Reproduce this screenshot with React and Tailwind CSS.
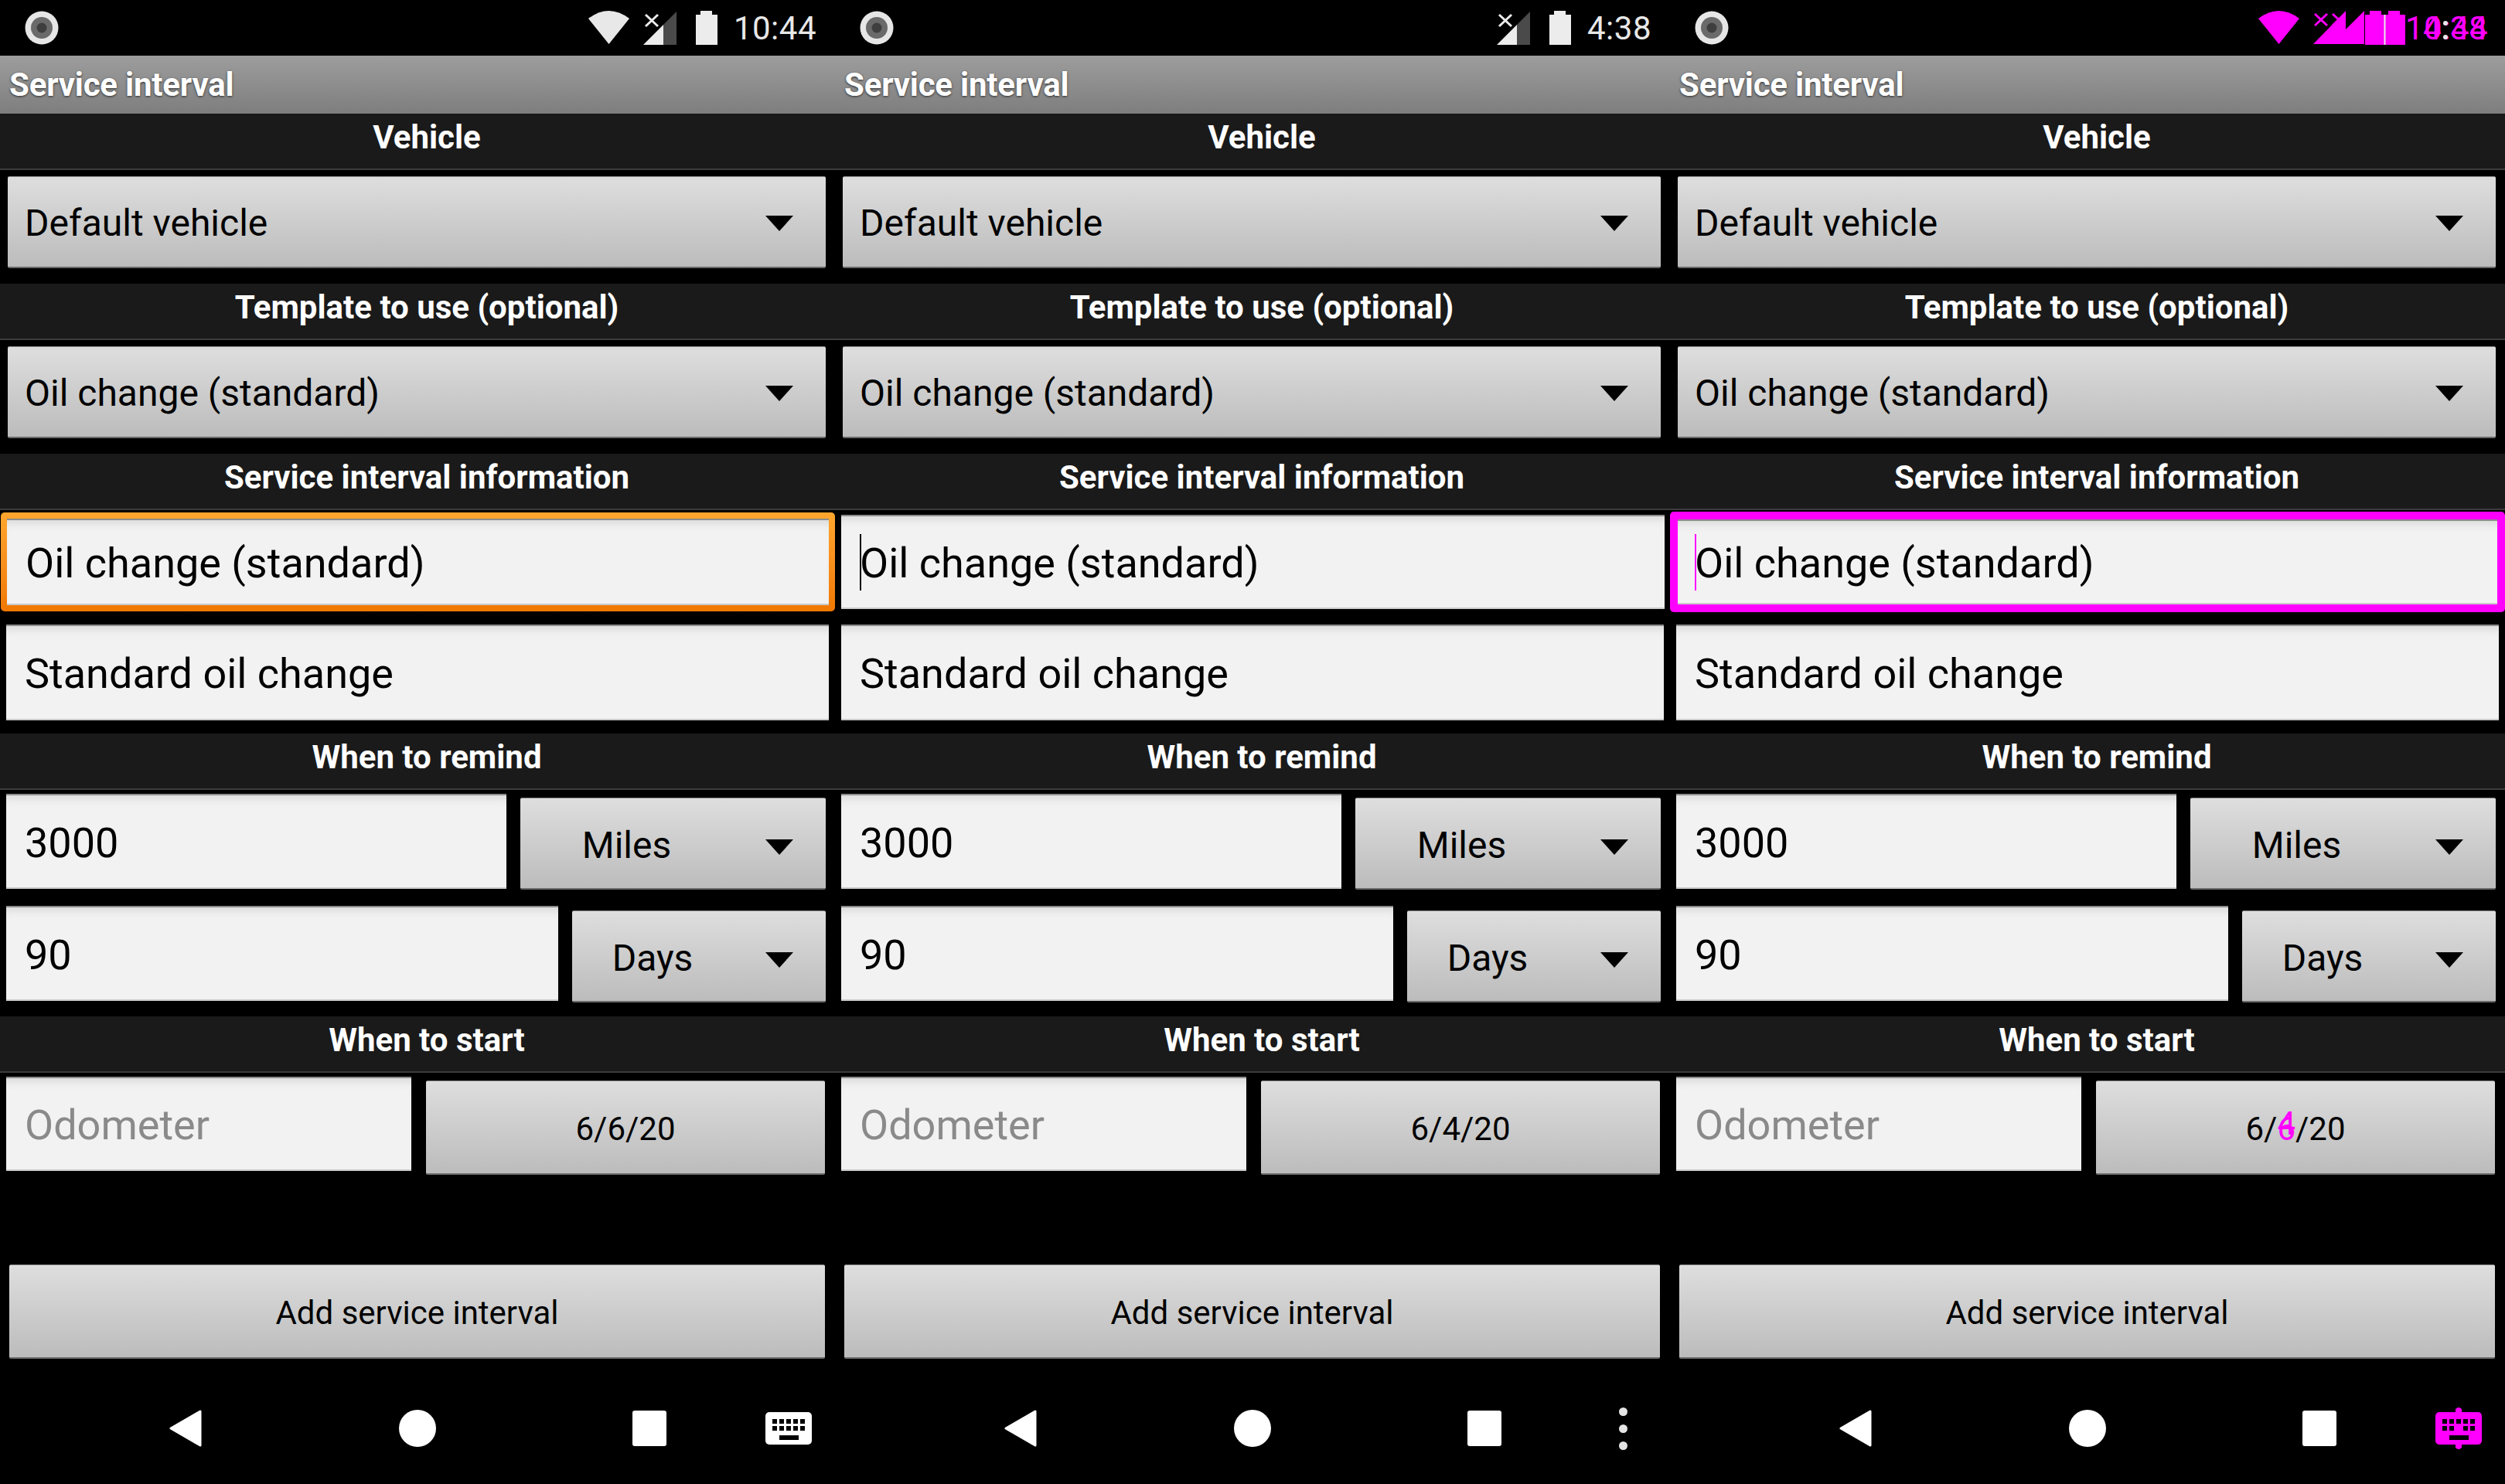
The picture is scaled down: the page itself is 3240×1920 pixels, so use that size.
const MAGENTA = '#ff00ff'

function Recorder() {
  return (
    <svg width="44" height="44" viewBox="0 0 44 44">
      <circle cx="22" cy="22" r="21.5" fill="#e6e6e6" />
      <circle cx="22" cy="22" r="14" fill="#6a6a6a" />
      <circle cx="22" cy="22" r="6.5" fill="#3e3e3e" />
    </svg>
  )
}

function Wifi() {
  return (
    <svg width="53" height="43" viewBox="0 0 53 43">
      <path d="M0 10Q26.5-10 53 10L26.5 43Z" fill="#e8e8e8" />
    </svg>
  )
}

function Signal() {
  return (
    <svg width="43" height="43" viewBox="0 0 43 43">
      <path d="M26 17L43 0V43H26Z" fill="#4a4a4a" />
      <path d="M0 43L26 17V43Z" fill="#ececec" />
      <path d="M3 4L19 19M19 4L3 19" stroke="#ececec" strokeWidth="3" />
    </svg>
  )
}

function Battery() {
  return (
    <svg width="28" height="44" viewBox="0 0 28 44">
      <path d="M6 0H21V5H28V44H0V5H6Z" fill="#ececec" />
    </svg>
  )
}

function StatusBar({ wifi, time }) {
  return (
    <div className="h-[72px] flex items-center pl-[32px] pr-[24px]">
      <Recorder />
      <div className="ml-auto flex items-center">
        {wifi && <div className="mr-[18px] mt-[-1px]"><Wifi /></div>}
        <Signal />
        <div className="ml-[25px] mr-[21px]"><Battery /></div>
        <span className="text-[42px] leading-none tracking-[0.5px] text-[#e8e8e8] mt-[2px]">{time}</span>
      </div>
    </div>
  )
}

// third panel is a pixel diff of the other two, differences come out magenta
function DiffStatusBar() {
  return (
    <div className="h-[72px] flex items-center pl-[32px]">
      <Recorder />
      <div className="ml-[685px] flex items-center">
        <svg width="190" height="44" viewBox="0 0 190 44">
          <path d="M0 10Q26.5-10 53 10L26.5 43Z" fill={MAGENTA} />
          <path d="M71 43L113 0V43ZM94 43L137 0V43Z" fill={MAGENTA} />
          <path d="M73 4L89 19M89 4L73 19M96 4L112 19M112 4L96 19" stroke={MAGENTA} strokeWidth="3" />
          <path d="M144 0H159V5H166V44H138V5H144ZM168 0H183V5H190V44H162V5H168Z" fill={MAGENTA} />
          <rect x="162.5" y="5" width="2" height="39" fill="#e8e8e8" />
        </svg>
        <div className="relative w-[104px] h-[44px] text-[42px] leading-[46px] tracking-[0.5px] text-[#ff00ff]">
          <span className="absolute left-0 top-0">10:44</span>
          <span className="absolute left-[23px] top-0">4:38</span>
          <span className="absolute left-[49px] top-[13px] w-[6px] h-[6px] rounded-full bg-[#e8e8e8]" />
          <span className="absolute left-[49px] top-[31px] w-[6px] h-[6px] rounded-full bg-[#e8e8e8]" />
        </div>
      </div>
    </div>
  )
}

function TitleBar() {
  return (
    <div className="h-[75px] flex items-center pl-[12px] bg-linear-to-b from-[#9d9d9d] to-[#7e7e7e] text-[42px] font-bold tracking-[-0.2px] text-white [text-shadow:0_1px_3px_#2a2a2a]">
      Service interval
    </div>
  )
}

function Header({ label, className }) {
  return (
    <div className={`h-[73px] shrink-0 flex items-center justify-center pl-[24px] pb-[11px] bg-[#1a1a1a] border-b-2 border-[#3c3c3c] text-[42px] font-bold text-white ${className}`}>
      {label}
    </div>
  )
}

function Arrow() {
  return (
    <svg width="36" height="20" viewBox="0 0 36 20" className="shrink-0">
      <path d="M0 0H36L18 20Z" fill="#000" />
    </svg>
  )
}

function Raised({ className, children }) {
  return (
    <div className={`rounded-[2px] border-t border-t-[#8a8a8a] border-b-2 border-b-[#6a6a6a] bg-linear-to-b from-[#dedede] to-[#bcbcbc] text-black ${className}`}>
      {children}
    </div>
  )
}

function WideSpinner({ label, className }) {
  return (
    <Raised className={`ml-[10px] w-[1058px] h-[119px] flex items-center pl-[22px] pr-[42px] pt-[4px] justify-between text-[48px] ${className}`}>
      <span>{label}</span>
      <Arrow />
    </Raised>
  )
}

function UnitSpinner({ label, className }) {
  return (
    <Raised className={`relative flex items-center justify-center pr-[120px] pt-[5px] text-[48px] ${className}`}>
      {label}
      <div className="absolute right-[42px] top-[53px]"><Arrow /></div>
    </Raised>
  )
}

function Edit({ className, muted, caret, children }) {
  return (
    <div className={`relative flex items-center pt-[3px] border-t-2 border-t-[#8c8c8c] border-b-2 border-b-[#c9c9c9] bg-[#f2f2f2] shadow-[inset_0_12px_12px_-8px_#d8d8d8] text-[54px] ${muted ? 'text-[#8a8a8a]' : 'text-black'} ${className}`}>
      {caret && <span className={`absolute w-[2px] h-[73px] ${caret}`} />}
      {children}
    </div>
  )
}

function FocusEdit({ mode }) {
  if (mode === 'orange') {
    return (
      <div className="mt-[2px] h-[130px] flex items-center pl-[1px]">
        <div className="w-[1079px] h-[128px] p-[8px] rounded-[5px] bg-linear-to-b from-[#ffa62e] to-[#f07800]">
          <Edit className="w-full h-full pl-[24px]">Oil change (standard)</Edit>
        </div>
      </div>
    )
  }
  if (mode === 'magenta') {
    return (
      <div className="mt-[2px] h-[130px] p-[10px] rounded-[5px] bg-[#ff00ff]">
        <Edit className="w-full h-full pl-[22px]" caret="bg-[#ff00ff] left-[22px] top-[17px]">Oil change (standard)</Edit>
      </div>
    )
  }
  return (
    <div className="mt-[2px] h-[130px] flex items-center pl-[8px]">
      <Edit className="w-[1065px] h-[122px] pl-[24px]" caret="bg-black left-[24px] top-[23px]">Oil change (standard)</Edit>
    </div>
  )
}

function DateValue({ date }) {
  if (date !== 'diff') return date
  return (
    <>
      6/
      <span className="relative text-[#ff00ff]">
        6<span className="absolute left-0 top-[-14px]">4</span>
      </span>
      /20
    </>
  )
}

function BackIcon() {
  return (
    <svg width="42" height="48" viewBox="0 0 42 48">
      <path d="M40 2V46L2 24Z" fill="#fff" stroke="#fff" strokeWidth="3" strokeLinejoin="round" />
    </svg>
  )
}

function Keyboard({ color }) {
  return (
    <svg width="60" height="54" viewBox="0 0 60 54">
      {color !== '#fff' && <path d="M26 6V2Q30-2 34 2V6ZM26 48V52Q30 56 34 52V48Z" fill={color} />}
      <rect x="0" y="6" width="60" height="42" rx="5" fill={color} />
      <g fill="#000">
        <rect x="9" y="15" width="6" height="6" />
        <rect x="18" y="15" width="6" height="6" />
        <rect x="27" y="15" width="6" height="6" />
        <rect x="36" y="15" width="6" height="6" />
        <rect x="45" y="15" width="6" height="6" />
        <rect x="9" y="24" width="6" height="6" />
        <rect x="18" y="24" width="6" height="6" />
        {color === '#fff' && <rect x="27" y="24" width="6" height="6" />}
        <rect x="36" y="24" width="6" height="6" />
        <rect x="45" y="24" width="6" height="6" />
        <rect x="18" y="36" width="25" height="6" />
      </g>
    </svg>
  )
}

function NavBar({ extra }) {
  return (
    <div className="mt-[63px] h-[54px] flex items-center pl-[219px]">
      <BackIcon />
      <div className="ml-[255px] w-[48px] h-[48px] rounded-full bg-white" />
      <div className="ml-[254px] w-[44px] h-[46px] rounded-[3px] bg-white" />
      {extra === 'dots' && (
        <div className="ml-[152px] flex flex-col gap-[11px]">
          <div className="w-[11px] h-[11px] rounded-full bg-[#e4e4e4]" />
          <div className="w-[11px] h-[11px] rounded-full bg-[#e4e4e4]" />
          <div className="w-[11px] h-[11px] rounded-full bg-[#e4e4e4]" />
        </div>
      )}
      {extra === 'keyboard' && <div className="ml-[128px]"><Keyboard color="#fff" /></div>}
      {extra === 'diff' && <div className="ml-[128px]"><Keyboard color="#ff00ff" /></div>}
    </div>
  )
}

function Panel({ status, focus, date, nav }) {
  return (
    <div className="w-[1080px] h-[1920px] shrink-0 flex flex-col">
      {status}
      <TitleBar />
      <Header label="Vehicle" />
      <WideSpinner label="Default vehicle" className="mt-[8px]" />
      <Header label="Template to use (optional)" className="mt-[20px]" />
      <WideSpinner label="Oil change (standard)" className="mt-[8px]" />
      <Header label="Service interval information" className="mt-[20px]" />
      <FocusEdit mode={focus} />
      <Edit className="mt-[16px] ml-[8px] w-[1064px] h-[124px] pl-[24px]">Standard oil change</Edit>
      <Header label="When to remind" className="mt-[17px]" />
      <div className="mt-[5px] h-[124px] flex items-end pl-[8px] gap-[18px]">
        <Edit className="w-[647px] h-[123px] self-start pl-[24px]">3000</Edit>
        <UnitSpinner label="Miles" className="w-[395px] h-[119px]" />
      </div>
      <div className="mt-[21px] h-[125px] flex items-end pl-[8px] gap-[18px]">
        <Edit className="w-[714px] h-[123px] self-start pl-[24px]">90</Edit>
        <UnitSpinner label="Days" className="w-[328px] h-[119px]" />
      </div>
      <Header label="When to start" className="mt-[18px]" />
      <div className="mt-[5px] h-[127px] flex pl-[8px] gap-[19px]">
        <Edit muted className="w-[524px] h-[122px] self-start pl-[24px]">Odometer</Edit>
        <Raised className="w-[516px] h-[122px] self-end flex items-center justify-center pt-[4px] text-[42px]">
          <span><DateValue date={date} /></span>
        </Raised>
      </div>
      <Raised className="mt-[116px] ml-[12px] w-[1055px] h-[122px] flex items-center justify-center pt-[3px] text-[42px]">
        Add service interval
      </Raised>
      <NavBar extra={nav} />
    </div>
  )
}

export default function App() {
  return (
    <div className="w-[3240px] h-[1920px] flex bg-black overflow-hidden font-['Roboto',sans-serif]">
      <Panel status={<StatusBar wifi time="10:44" />} focus="orange" date="6/6/20" nav="keyboard" />
      <Panel status={<StatusBar time="4:38" />} focus="caret" date="6/4/20" nav="dots" />
      <Panel status={<DiffStatusBar />} focus="magenta" date="diff" nav="diff" />
    </div>
  )
}
